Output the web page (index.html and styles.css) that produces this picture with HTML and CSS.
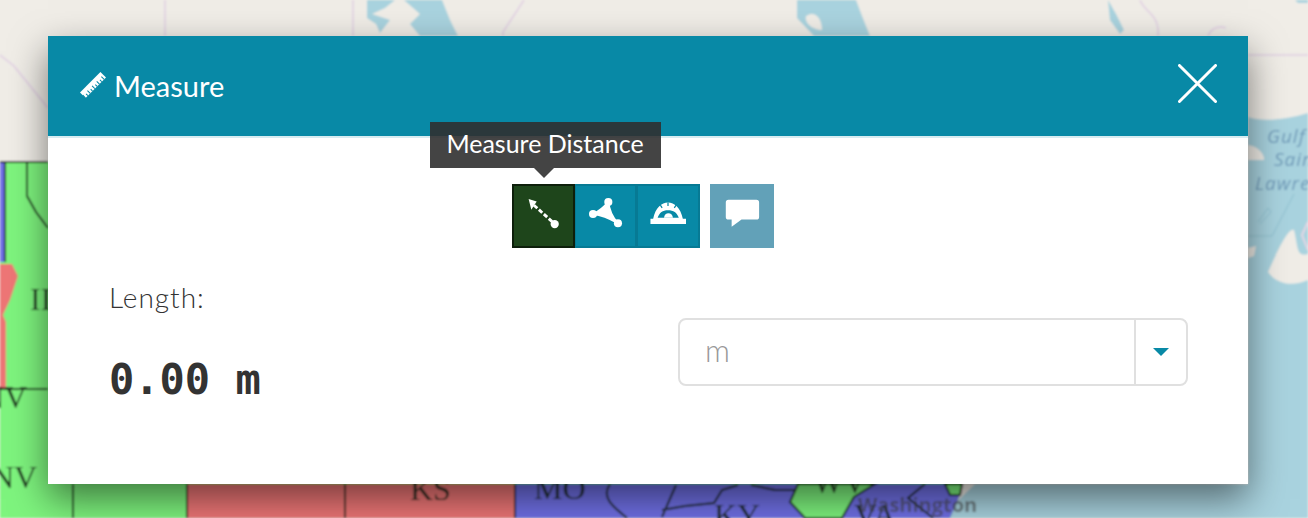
FILE: index.html
```html
<!DOCTYPE html>
<html lang="en">
<head>
<meta charset="utf-8">
<title>Measure</title>
<link rel="stylesheet" href="styles.css">
</head>
<body>
<svg class="map" viewBox="0 0 1308 518" xmlns="http://www.w3.org/2000/svg">
  <defs><filter id="soft"><feGaussianBlur stdDeviation="0.8"/></filter></defs>
  <g filter="url(#soft)">
    <rect width="1308" height="518" fill="#f0ede7"/>
    <!-- Water -->
    <path class="water" d="M1248 117 C1262 122 1285 120 1308 113 V518 H940 L975 484 H1248 Z"/>
    <path class="land" d="M1248 145 C1258 146 1265 155 1264 160 L1248 160 Z"/>
    <path class="land" d="M1248 248 L1256 246 L1254 256 L1248 258 Z"/>
    <path class="land" d="M1268 272 C1278 250 1288 228 1294 230 C1298 245 1296 258 1308 254 V280 C1295 286 1278 286 1268 272 Z"/>
    <path class="border" d="M1248 55 H1308"/>
    <path class="border" d="M1308 222 L1302 235 L1308 250"/>
    <path class="water-line" d="M1258 222 L1268 208 L1271 212 L1260 224"/>
    <path class="water-line" d="M1248 236 H1272 L1294 194"/>
    <path class="water" d="M367 0 H395 L385 8 L372 14 L390 20 L380 33 L376 24 L367 18 Z"/>
    <path class="water" d="M404 0 H442 L450 20 L458 36 H420 L410 24 L420 14 Z"/>
    <path class="water" d="M797 0 H856 L862 16 L870 36 H814 L797 18 Z"/>
    <path class="land" d="M806 16 C815 10 822 18 822 30 C814 30 804 24 806 16 Z"/>
    <path class="border" d="M165 0 V36 M353 0 V36 M524 0 L503 32 V36 M0 55 L14 66 L48 108"/>
    <path class="border" d="M1140 0 C1144 12 1160 14 1158 36 M1208 36 C1212 26 1222 26 1226 28"/>
    <path class="water" d="M1108 0 L1116 14 L1124 30 L1120 34 L1110 20 Z"/>
    <path class="water" d="M1295 0 H1308 V3 H1298 Z"/>
    <!-- Gulf labels -->
    <text class="gulf" x="1267" y="143">Gulf</text>
    <text class="gulf" x="1274" y="166">Sain</text>
    <text class="gulf" x="1255" y="190">Lawre</text>
    <!-- States -->
    <path class="green" d="M0 162 H962 V484 L960 495 L950 518 H0 Z"/>
    <rect class="blue" x="0" y="162" width="5" height="100"/>
    <path class="red" d="M0 264 H12 L18 276 L10 300 L3 315 L6 322 V389 H0 Z"/>
    <rect class="red" x="187" y="484" width="328" height="34"/>
    <path class="blue" d="M515 484 H962 L960 495 L950 518 H515 Z"/>
    <path class="green line" d="M798 484 H875 L854 497 L842 518 H805 L790 502 Z"/>
    <path class="green line" d="M945 484 H962 L960 495 H950 Z"/>
    <path class="line" d="M0 162 H48 M5 162 V262 M27 162 V196 L36 212 L48 228 M0 389 H48 M73 484 V518 M187 484 V518 M345 484 V518 M515 484 V518 M610 484 C600 498 615 508 627 518 M676 485 L662 517 M662 510 L685 506 L714 503 L722 490 L738 485 M751 485 L775 490 L796 490 M925 484 L908 498 L933 518"/>
    <g class="state">
      <text x="30" y="310">II</text>
      <text x="-19" y="408">NV</text>
      <text x="-9" y="488">NV</text>
      <text x="410" y="500">KS</text>
      <text x="534" y="499">MO</text>
      <text x="714" y="526">KY</text>
      <text x="813" y="493">WV</text>
      <text x="854" y="526">VA</text>
    </g>
    <text class="city" x="858" y="512">Washington</text>
  </g>
</svg>

<section class="modal">
  <header class="modal-header">
    <h1 class="modal-title">
      <svg class="ruler" viewBox="0 0 28 28" aria-hidden="true"><path d="M0 22 L22 0 L28 6 L6 28 Z" fill="#fff"/><path d="M6 28 L3 25 M8.500 25.500 L6.500 23.500 M11 23 L8 20 M13.500 20.500 L11.500 18.500 M16 18 L13 15 M18.500 15.500 L16.500 13.500 M21 13 L18 10 M23.500 10.500 L21.500 8.500 M26 8 L23 5" stroke="#0889a6" stroke-width="1.100"/></svg>
      <span>Measure</span>
    </h1>
    <svg class="close" viewBox="0 0 40 40" aria-hidden="true"><path d="M1.500 1.500 L38.500 38.500 M38.500 1.500 L1.500 38.500" stroke="#fff" stroke-width="3" stroke-linecap="round"/></svg>
  </header>
  <div class="modal-body">
    <div class="toolbar">
      <div class="btn-group">
        <div class="tool active">
          <div class="tooltip">Measure Distance</div>
          <svg class="tool-icon" viewBox="0 0 40 40" aria-hidden="true"><path d="M4 1 L13 4 L7 13 Z" fill="#fff"/><path d="M10 8 L32 28" stroke="#fff" stroke-width="3.200" stroke-dasharray="5 2.400"/><circle cx="33" cy="29" r="4.600" fill="#fff"/></svg>
        </div>
        <div class="tool mid">
          <svg class="tool-icon" viewBox="0 0 40 40" aria-hidden="true"><path d="M23.700 4 Q25 18 34.400 28 Q19 19 6.700 17.800 Q17 13 23.700 4 Z" fill="#fff" stroke="#fff" stroke-width="2" stroke-linejoin="round"/><circle cx="23.700" cy="4.500" r="4.500" fill="#fff"/><circle cx="34.400" cy="28" r="4.500" fill="#fff"/><circle cx="6.700" cy="17.800" r="4.500" fill="#fff"/></svg>
        </div>
        <div class="tool">
          <svg class="tool-icon" viewBox="0 0 40 40" aria-hidden="true"><path fill-rule="evenodd" d="M0.500 29 V23 H3.500 C6 11 13 5 20 5 C27 5 34 11 36.500 23 H40 V29 Z M8.500 22 H32 C30 16 26 13.500 20 13.500 C14 13.500 10.500 16 8.500 22 Z" fill="#fff"/><path d="M15.500 22 C16 18.500 18 17 20.500 17 C23 17 25 18.500 25.500 22 Z" fill="#fff"/><path d="M20 5 V9 M11.500 8 L13.500 11 M29 8 L27 11" stroke="#0889a6" stroke-width="1.400"/></svg>
        </div>
      </div>
      <div class="tool note">
        <svg class="tool-icon" viewBox="0 0 40 40" aria-hidden="true"><path d="M5 2 H36 Q39 2 39 5 V21 Q39 24 36 24 H19.500 L8.500 32 V24 H5 Q2 24 2 21 V5 Q2 2 5 2 Z" fill="#fff"/></svg>
      </div>
    </div>
    <div class="result-row">
      <div class="result">
        <div class="result-label">Length:</div>
        <div class="result-value">0.00 m</div>
      </div>
      <div class="select">
        <span class="select-value">m</span>
        <span class="select-arrow"><span class="caret"></span></span>
      </div>
    </div>
  </div>
</section>
</body>
</html>
```
FILE: styles.css
```css
html, body { margin: 0; padding: 0; }
body {
  width: 1308px;
  height: 518px;
  overflow: hidden;
  position: relative;
  font-family: Lato, "Noto Sans", sans-serif;
  color: #333;
  background: #f0ede7;
}
.map { position: absolute; left: 0; top: 0; width: 1308px; height: 518px; display: block; }
.water { fill: #a9d3df; }
.land { fill: #f0ede7; }
.border { fill: none; stroke: #e4d6e4; stroke-width: 2; }
.water-line { fill: none; stroke: #8fc0cf; stroke-width: 1; }
.gulf { font: italic 19px "Open Sans", sans-serif; fill: #6f9ab8; letter-spacing: 1px; }
.green { fill: #7ef47e; }
.blue { fill: #6f6fe6; }
.red { fill: #ee7676; }
.line { fill: none; stroke: #1a2a1a; stroke-width: 2; }
.green.line { fill: #7ef47e; }
.state { font: 32px "Liberation Serif", serif; fill: #1c2c1c; }
.city { font: bold 20px "Open Sans", sans-serif; fill: #444; opacity: .6; }

.modal {
  position: absolute;
  left: 48px;
  top: 36px;
  width: 1200px;
  height: 448px;
  background: #fff;
  box-shadow: 0 15px 35px rgba(0, 0, 0, .5);
  display: flex;
  flex-direction: column;
}
.modal-header {
  height: 100px;
  background: #0889a6;
  border-bottom: 2px solid #d6ecf1;
  display: flex;
  align-items: center;
  justify-content: space-between;
  padding: 0 31px 0 32px;
  color: #fff;
}
.modal-title { margin: 0 0 2px; display: flex; align-items: center; gap: 8px; font-size: 29px; font-weight: 400; }
.ruler { width: 26px; height: 26px; display: block; }
.close { width: 39px; height: 39px; display: block; margin-bottom: 5px; }
.modal-body { flex: 1; padding: 46px 60px 0 61px; }
.toolbar { display: flex; justify-content: center; gap: 10px; padding-right: 12px; }
.btn-group { display: flex; }
.tool {
  position: relative;
  width: 63px;
  height: 64px;
  box-sizing: border-box;
  background: #0889a6;
  border: 2px solid #077a94;
  display: flex;
  align-items: center;
  justify-content: center;
}
.tool + .tool { border-left-width: 1px; }
.tool.mid { width: 62px; }
.tool.active { background: #1e451b; border-color: #0d1f0b; }
.tool.note { width: 64px; background: #62a1b8; border-color: #62a1b8; }
.tool-icon { width: 36px; height: 36px; display: block; }
.tooltip {
  position: absolute;
  left: -84px;
  top: -64px;
  width: 231px;
  height: 46px;
  background: rgba(48, 48, 48, .9);
  color: #fff;
  font-size: 25px;
  line-height: 42px;
  text-align: center;
  white-space: nowrap;
}
.tooltip::after {
  content: "";
  position: absolute;
  left: 104px;
  top: 46px;
  border: 10px solid transparent;
  border-bottom-width: 0;
  border-top-color: rgba(48, 48, 48, .9);
}
.result-row { display: grid; grid-template-columns: 1fr 510px; margin-top: 33px; }
.result-label { font-size: 28px; letter-spacing: 1px; line-height: 32px; color: #333; font-weight: 300; }
.result-value {
  font-family: "DejaVu Sans Mono", monospace;
  font-weight: 700;
  font-size: 42px;
  line-height: 48px;
  margin-top: 43px;
  color: #333;
}
.select {
  height: 68px;
  margin-top: 37px;
  box-sizing: border-box;
  border: 2px solid #e0e0e0;
  border-radius: 8px;
  display: flex;
  align-items: stretch;
}
.select-value { flex: 1; padding-left: 25px; font-size: 31px; line-height: 60px; color: #999; font-weight: 300; }
.select-arrow { width: 50px; border-left: 2px solid #e0e0e0; display: flex; align-items: center; justify-content: center; }
.caret { border: 8px solid transparent; border-bottom-width: 0; border-top-color: #0889a6; }
```
